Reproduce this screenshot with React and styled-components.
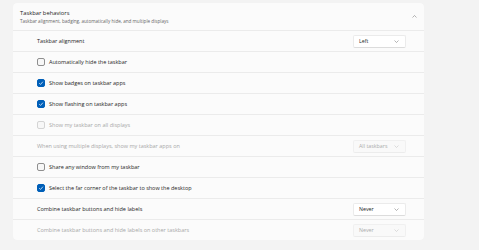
import React from "react";
import styled, { createGlobalStyle } from "styled-components";

const Global = createGlobalStyle`
  html, body {
    margin: 0;
    background: #f3f3f3;
    font-family: "Open Sans", "Noto Sans", sans-serif;
  }
`;

const Page = styled.div`
  padding: 3px 0 0 13px;
  width: 411px;
`;

const Card = styled.div`
  display: flex;
  flex-direction: column;
  gap: 1px;
  background: #ebebeb;
  border-radius: 4px;
  overflow: hidden;
`;

const Header = styled.div`
  height: 27px;
  background: #fbfbfb;
  display: flex;
  align-items: center;
  justify-content: space-between;
  padding: 0 7px;
`;

const Titles = styled.div`
  display: flex;
  flex-direction: column;
  gap: 1px;
`;

const Title = styled.div`
  font-size: 5.8px;
  color: #1b1b1b;
  line-height: 7px;
`;

const Subtitle = styled.div`
  font-size: 4.6px;
  color: #666;
  line-height: 6px;
`;

const Row = styled.div`
  height: 20px;
  background: #fbfbfb;
  display: flex;
  align-items: center;
  justify-content: space-between;
  padding: 0 18px 0 24px;
`;

const Label = styled.label`
  display: flex;
  align-items: center;
  gap: 4px;
  font-size: 5.5px;
  color: ${(p) => (p.disabled ? "#a8a8a8" : "#262626")};
`;

const Box = styled.span`
  width: 8px;
  height: 8px;
  box-sizing: border-box;
  border-radius: 2px;
  display: flex;
  align-items: center;
  justify-content: center;
  background: ${(p) => (p.checked ? "#005fb8" : "#f7f7f7")};
  border: 1px solid
    ${(p) => (p.checked ? "#005fb8" : p.disabled ? "#d4d4d4" : "#8f8f8f")};
`;

const Select = styled.div`
  width: 53px;
  height: 13px;
  box-sizing: border-box;
  border: 1px solid ${(p) => (p.disabled ? "#f0f0f0" : "#ebebeb")};
  border-bottom-color: ${(p) => (p.disabled ? "#ececec" : "#dcdcdc")};
  border-radius: 2px;
  background: ${(p) => (p.disabled ? "#f9f9f9" : "#ffffff")};
  display: flex;
  align-items: center;
  justify-content: space-between;
  padding: 0 6px 0 5px;
  font-size: 5.3px;
  color: ${(p) => (p.disabled ? "#ababab" : "#262626")};
`;

const Chevron = ({ up, color = "#6a6a6a" }) => (
  <svg width="5" height="3" viewBox="0 0 10 6">
    <path
      d={up ? "M1 5 L5 1 L9 5" : "M1 1 L5 5 L9 1"}
      fill="none"
      stroke={color}
      strokeWidth="1"
    />
  </svg>
);

const Check = () => (
  <svg width="6" height="6" viewBox="0 0 10 10">
    <path d="M2 5.2 L4.2 7.4 L8.2 2.8" fill="none" stroke="#fff" strokeWidth="1.2" />
  </svg>
);

const CheckRow = ({ label, checked, disabled }) => (
  <Row>
    <Label disabled={disabled}>
      <Box checked={checked} disabled={disabled}>
        {checked && <Check />}
      </Box>
      {label}
    </Label>
  </Row>
);

const SelectRow = ({ label, value, disabled }) => (
  <Row>
    <Label disabled={disabled}>{label}</Label>
    <Select disabled={disabled}>
      {value}
      <Chevron color={disabled ? "#bdbdbd" : "#6a6a6a"} />
    </Select>
  </Row>
);

export default function App() {
  return (
    <Page>
      <Global />
      <Card>
        <Header>
          <Titles>
            <Title>Taskbar behaviors</Title>
            <Subtitle>
              Taskbar alignment, badging, automatically hide, and multiple displays
            </Subtitle>
          </Titles>
          <Chevron up />
        </Header>
        <SelectRow label="Taskbar alignment" value="Left" />
        <CheckRow label="Automatically hide the taskbar" />
        <CheckRow label="Show badges on taskbar apps" checked />
        <CheckRow label="Show flashing on taskbar apps" checked />
        <CheckRow label="Show my taskbar on all displays" disabled />
        <SelectRow
          label="When using multiple displays, show my taskbar apps on"
          value="All taskbars"
          disabled
        />
        <CheckRow label="Share any window from my taskbar" />
        <CheckRow label="Select the far corner of the taskbar to show the desktop" checked />
        <SelectRow label="Combine taskbar buttons and hide labels" value="Never" />
        <SelectRow
          label="Combine taskbar buttons and hide labels on other taskbars"
          value="Never"
          disabled
        />
      </Card>
    </Page>
  );
}
